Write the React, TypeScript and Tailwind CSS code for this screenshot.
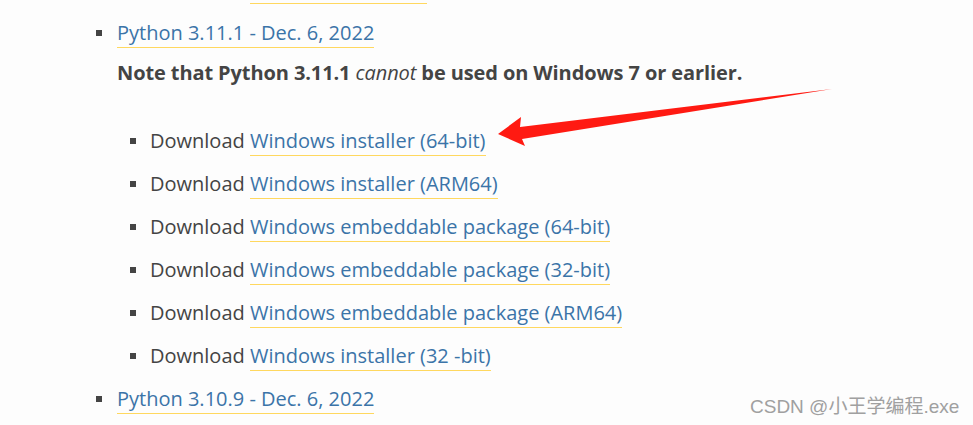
const items = [
  "Windows installer (64-bit)",
  "Windows installer (ARM64)",
  "Windows embeddable package (64-bit)",
  "Windows embeddable package (32-bit)",
  "Windows embeddable package (ARM64)",
  "Windows installer (32 -bit)",
];

function Bullet() {
  return <span className="mt-[10px] h-[6px] w-[6px] shrink-0 bg-[#444444]" />;
}

function Link({ children }: { children: React.ReactNode }) {
  return (
    <a className="border-b border-[#ffd85f] pb-[1px] text-[#3b74a8]" href="#">
      {children}
    </a>
  );
}

export default function App() {
  return (
    <div
      className="relative h-[425px] w-[973px] overflow-hidden bg-[#fdfdfd] text-[20px] leading-[26px] text-[#444444]"
      style={{ fontFamily: '"Open Sans", "Noto Sans", sans-serif' }}
    >
      <div className="ml-[250px] mt-[3px] h-px w-[177px] bg-[#ffd85f]" />

      <ul className="pl-[96px] pt-[16px]">
        <li className="flex gap-[15px]">
          <Bullet />
          <div>
            <Link>Python 3.11.1 - Dec. 6, 2022</Link>
            <p className="mt-[14px] font-bold tracking-[-0.1px]">
              Note that Python 3.11.1 <em className="font-normal">cannot</em> be used on Windows 7 or earlier.
            </p>
            <ul className="mt-[42px] ml-[13px] flex flex-col gap-[17px]">
              {items.map((it) => (
                <li key={it} className="flex gap-[14px]">
                  <Bullet />
                  <span>
                    Download <Link>{it}</Link>
                  </span>
                </li>
              ))}
            </ul>
          </div>
        </li>
        <li className="mt-[17px] flex gap-[15px]">
          <Bullet />
          <Link>Python 3.10.9 - Dec. 6, 2022</Link>
        </li>
      </ul>

      {/* red annotation arrow */}
      <svg className="absolute left-0 top-0" width="973" height="425" viewBox="0 0 973 425">
        <polygon
          points="498,134 521,117 520,127 832,89 522,139 525,146"
          fill="#ff1a12"
        />
      </svg>

      <div
        className="absolute left-[750px] top-[394px] text-[19px] text-[#a0a0a0]"
        style={{ fontFamily: '"Liberation Sans", "Noto Sans CJK SC", sans-serif', textShadow: "0 0 1px #ffffff" }}
      >
        CSDN @小王学编程.exe
      </div>
    </div>
  );
}
